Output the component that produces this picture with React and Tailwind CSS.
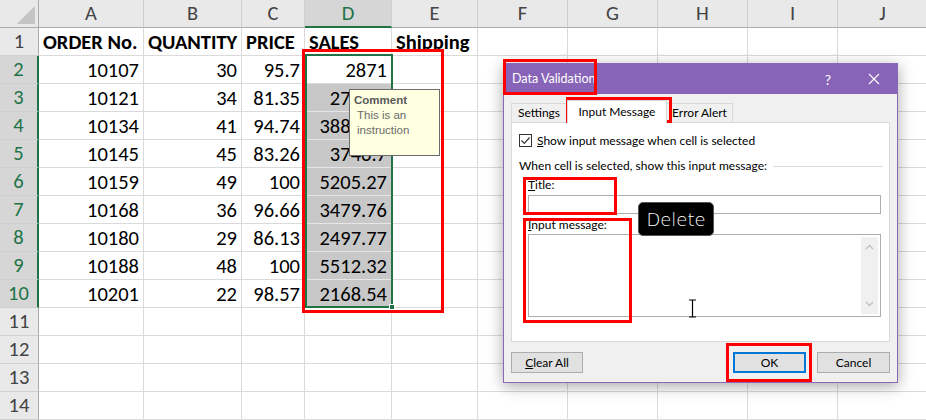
import React from 'react';

const cols = ['A', 'B', 'C', 'D', 'E', 'F', 'G', 'H', 'I', 'J'];

const rows = [
  ['ORDER No.', 'QUANTITY', 'PRICE', 'SALES', 'Shipping'],
  ['10107', '30', '95.7', '2871'],
  ['10121', '34', '81.35', '2765.9'],
  ['10134', '41', '94.74', '3884.34'],
  ['10145', '45', '83.26', '3746.7'],
  ['10159', '49', '100', '5205.27'],
  ['10168', '36', '96.66', '3479.76'],
  ['10180', '29', '86.13', '2497.77'],
  ['10188', '48', '100', '5512.32'],
  ['10201', '22', '98.57', '2168.54'],
  [],
  [],
  [],
  [],
];

const sheetFont = { fontFamily: 'Carlito, Lato, "Liberation Sans", sans-serif' };
const uiFont = { fontFamily: 'Lato, "Liberation Sans", sans-serif' };

function Sheet() {
  return (
    <div
      className="grid grid-cols-[39px_105px_98px_63px_87px_86px_90px_90px_90px_90px_90px] auto-rows-[28px] w-[928px] text-[20.5px] text-black"
      style={sheetFont}
    >
      {/* corner */}
      <div className="relative bg-[#e9e9e9] border-r border-b border-[#ababab]">
        <div className="absolute right-[3px] bottom-[3px] w-0 h-0 border-l-[18px] border-l-transparent border-b-[18px] border-b-[#c4c4c4]" />
      </div>
      {cols.map((c) => (
        <div
          key={c}
          className={
            c === 'D'
              ? 'flex items-center justify-center bg-[#d6d6d6] text-[#217346] border-r border-r-[#cfcfcf] border-b-2 border-b-[#217346]'
              : 'flex items-center justify-center bg-[#e9e9e9] text-[#444] border-r border-r-[#cfcfcf] border-b border-b-[#ababab]'
          }
        >
          {c}
        </div>
      ))}

      {rows.map((r, i) => {
        const n = i + 1;
        const sel = n >= 2 && n <= 10;
        return (
          <React.Fragment key={n}>
            <div
              className={
                sel
                  ? 'flex items-center justify-center bg-[#d6d6d6] text-[#217346] border-b border-b-[#cfcfcf] border-r-2 border-r-[#217346]'
                  : 'flex items-center justify-center bg-[#e9e9e9] text-[#444] border-b border-b-[#cfcfcf] border-r border-r-[#ababab]'
              }
            >
              {n}
            </div>
            {cols.map((c, j) => {
              const v = r[j];
              const shaded = c === 'D' && n >= 3 && n <= 10;
              const head = n === 1;
              return (
                <div
                  key={c}
                  className={
                    (shaded
                      ? 'bg-[#c8c8c8] border-r border-b border-[#e6e6e6] '
                      : 'bg-white border-r border-b border-[#dadada] ') +
                    'flex items-center pt-[1px] overflow-visible whitespace-nowrap ' +
                    (head ? 'justify-start pl-[4px] font-bold' : 'justify-end pr-[4px]')
                  }
                >
                  {v}
                </div>
              );
            })}
          </React.Fragment>
        );
      })}
    </div>
  );
}

function Dialog() {
  return (
    <div
      className="absolute left-[503px] top-[63px] w-[395px] border border-[#8a67b8] bg-[#f0f0f0] shadow-[0_3px_14px_rgba(0,0,0,0.35)] flex flex-col text-[12px] text-black"
      style={uiFont}
    >
      <div className="h-[30px] bg-[#8764b8] flex items-center pl-[8px] text-white">
        <span className="text-[12.5px]">Data Validation</span>
        <span className="ml-auto w-[46px] text-center text-[14px]">?</span>
        <span className="w-[46px] flex justify-center">
          <svg width="12" height="12" viewBox="0 0 12 12">
            <path d="M1 1 L11 11 M11 1 L1 11" stroke="#fff" strokeWidth="1.1" />
          </svg>
        </span>
      </div>

      <div className="px-[7px] pt-[6px] pb-[9px]">
        <div className="h-[22px] flex items-end">
          <div className="w-[56px] h-[19px] border border-b-0 border-[#d9d9d9] flex items-center justify-center">
            Settings
          </div>
          <div className="relative z-10 w-[100px] h-[23px] mb-[-1px] bg-white border border-b-0 border-[#d9d9d9] flex items-center justify-center">
            Input Message
          </div>
          <div className="w-[66px] h-[19px] border border-b-0 border-l-0 border-[#d9d9d9] flex items-center justify-center">
            Error Alert
          </div>
        </div>

        <div className="h-[220px] border border-[#d9d9d9] bg-white flex flex-col">
          <div className="mt-[11px] pl-[7px] flex items-center gap-[5px] h-[13px]">
            <div className="w-[13px] h-[13px] border border-[#333] bg-white flex items-center justify-center">
              <svg width="11" height="11" viewBox="0 0 11 11">
                <path d="M1.5 5.5 L4.3 8.3 L9.6 2.5" fill="none" stroke="#333" strokeWidth="1.2" />
              </svg>
            </div>
            <span>
              <span className="underline">S</span>how input message when cell is selected
            </span>
          </div>

          <div className="mt-[12px] pl-[7px] pr-[6px] flex items-center h-[14px]">
            <span className="whitespace-nowrap">When cell is selected, show this input message:</span>
            <div className="flex-1 h-px bg-[#dcdcdc] ml-[6px]" />
          </div>

          <div className="mt-[5px] pl-[16px] h-[14px] flex items-center">
            <span>
              <span className="underline">T</span>itle:
            </span>
          </div>
          <div className="mt-[3px] ml-[16px] w-[353px] h-[19px] border border-[#abadb3] bg-white" />

          <div className="mt-[4px] pl-[16px] h-[14px] flex items-center">
            <span>
              <span className="underline">I</span>nput message:
            </span>
          </div>
          <div className="mt-[2px] ml-[16px] w-[353px] h-[83px] border border-[#abadb3] bg-white flex justify-end p-[2px]">
            <div className="w-[17px] h-full bg-[#f0f0f0] flex flex-col items-center justify-between py-[7px]">
              <svg width="9" height="6" viewBox="0 0 9 6">
                <path d="M1 5 L4.5 1.5 L8 5" fill="none" stroke="#c2c2c2" strokeWidth="1.4" />
              </svg>
              <svg width="9" height="6" viewBox="0 0 9 6">
                <path d="M1 1 L4.5 4.5 L8 1" fill="none" stroke="#c2c2c2" strokeWidth="1.4" />
              </svg>
            </div>
          </div>
        </div>

        <div className="mt-[10px] flex items-center">
          <div className="w-[72px] h-[21px] border border-[#adadad] bg-[#e1e1e1] flex items-center justify-center">
            <span>
              <span className="underline">C</span>lear All
            </span>
          </div>
          <div className="ml-auto w-[73px] h-[21px] border-2 border-[#0078d7] bg-[#e1e1e1] flex items-center justify-center">
            OK
          </div>
          <div className="ml-[11px] w-[73px] h-[21px] border border-[#adadad] bg-[#e1e1e1] flex items-center justify-center">
            Cancel
          </div>
        </div>
      </div>
    </div>
  );
}

export default function App() {
  return (
    <div className="relative w-[926px] h-[420px] overflow-hidden bg-white">
      <Sheet />

      {/* selection border + fill handle */}
      <div className="absolute left-[305px] top-[54px] w-[88px] h-[254px] border-2 border-[#217346]" />
      <div className="absolute left-[389px] top-[304px] w-[6px] h-[6px] bg-[#217346] border border-white" />

      {/* comment */}
      <div
        className="absolute left-[349px] top-[89px] w-[91px] h-[67px] bg-[#ffffe1] border border-[#6b6b6b] px-[4px] pt-[3px] text-[11.5px] leading-[15px]"
        style={{ fontFamily: '"Liberation Sans", Arial, sans-serif' }}
      >
        <div className="font-bold text-[#595959]">Comment</div>
        <div className="pl-[3px] text-[#6a6a6a]">This is an</div>
        <div className="pl-[3px] text-[#6a6a6a]">instruction</div>
      </div>

      <Dialog />

      {/* Delete tooltip */}
      <div
        className="absolute left-[638px] top-[202px] w-[76px] h-[34px] rounded-[5px] bg-black border border-[#555] flex items-center justify-center text-white text-[18px] font-extralight"
        style={{ fontFamily: '"DejaVu Sans", Lato, sans-serif' }}
      >
        Delete
      </div>

      {/* I-beam cursor */}
      <svg className="absolute left-[688px] top-[299px]" width="9" height="19" viewBox="0 0 9 19">
        <path d="M1 1 H8 M4.5 1 V18 M1 18 H8" stroke="#000" strokeWidth="1.2" fill="none" />
      </svg>

      {/* red annotation boxes */}
      <div className="absolute left-[302px] top-[49px] w-[142px] h-[264px] border-[3px] border-[#ff0000]" />
      <div className="absolute left-[503px] top-[59px] w-[94px] h-[36px] border-[3px] border-[#ff0000]" />
      <div className="absolute left-[566px] top-[97px] w-[106px] h-[26px] border-[3px] border-[#ff0000]" />
      <div className="absolute left-[523px] top-[177px] w-[94px] h-[38px] border-[3px] border-[#ff0000]" />
      <div className="absolute left-[523px] top-[218px] w-[109px] h-[105px] border-[3px] border-[#ff0000]" />
      <div className="absolute left-[726px] top-[343px] w-[86px] h-[39px] border-[3px] border-[#ff0000]" />
    </div>
  );
}
